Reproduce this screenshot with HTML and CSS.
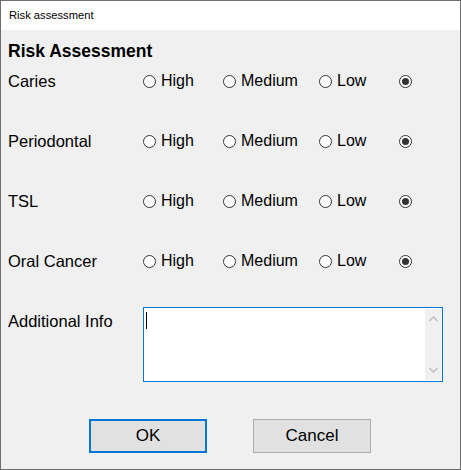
FILE: index.html
```html
<!DOCTYPE html>
<html lang="en">
<head>
    <meta charset="UTF-8">
    <meta name="viewport" content="width=device-width, initial-scale=1.0">
    <title>Risk assessment</title>
    <link rel="stylesheet" href="styles.css">
</head>
<body>
    <div class="window">
        <div class="titlebar">Risk assessment</div>
        <div class="content">
            <h1>Risk Assessment</h1>

            <div class="row">
                <div class="label">Caries</div>
                <div class="option high"><span class="radio"></span>High</div>
                <div class="option medium"><span class="radio"></span>Medium</div>
                <div class="option low"><span class="radio"></span>Low</div>
                <div class="option"><span class="radio checked"></span></div>
            </div>
            <div class="row">
                <div class="label">Periodontal</div>
                <div class="option high"><span class="radio"></span>High</div>
                <div class="option medium"><span class="radio"></span>Medium</div>
                <div class="option low"><span class="radio"></span>Low</div>
                <div class="option"><span class="radio checked"></span></div>
            </div>
            <div class="row">
                <div class="label">TSL</div>
                <div class="option high"><span class="radio"></span>High</div>
                <div class="option medium"><span class="radio"></span>Medium</div>
                <div class="option low"><span class="radio"></span>Low</div>
                <div class="option"><span class="radio checked"></span></div>
            </div>
            <div class="row">
                <div class="label">Oral Cancer</div>
                <div class="option high"><span class="radio"></span>High</div>
                <div class="option medium"><span class="radio"></span>Medium</div>
                <div class="option low"><span class="radio"></span>Low</div>
                <div class="option"><span class="radio checked"></span></div>
            </div>

            <div class="info-row">
                <div class="label info-label">Additional Info</div>
                <div class="textbox">
                    <span class="caret"></span>
                    <div class="scrollbar">
                        <svg width="17" height="14" viewBox="0 0 17 14"><path d="M4.5 9 L8.5 5 L12.5 9" fill="none" stroke="#c2c2c2" stroke-width="1.6"/></svg>
                        <svg width="17" height="14" viewBox="0 0 17 14"><path d="M4.5 5 L8.5 9 L12.5 5" fill="none" stroke="#c2c2c2" stroke-width="1.6"/></svg>
                    </div>
                </div>
            </div>

            <div class="buttons">
                <button class="btn default">OK</button>
                <button class="btn">Cancel</button>
            </div>
        </div>
    </div>
</body>
</html>
```
FILE: styles.css
```css
body {
    margin: 0;
    padding: 0;
    font-family: "Liberation Sans", Arial, sans-serif;
    color: #000;
}

.window {
    width: 461px;
    height: 470px;
    box-sizing: border-box;
    border: 1px solid #6e6e6e;
    background-color: #f0f0f0;
    display: flex;
    flex-direction: column;
}

.titlebar {
    height: 29px;
    background-color: #fff;
    font-size: 11.2px;
    line-height: 29px;
    padding-left: 8px;
}

.content {
    padding: 11px 0 0 7px;
}

h1 {
    margin: 0 0 8px 0;
    font-size: 17.5px;
    line-height: 20px;
    font-weight: bold;
}

.row {
    display: flex;
    align-items: center;
    height: 24px;
    margin-bottom: 36px;
    font-size: 16px;
}

.label {
    width: 135px;
    font-size: 16.5px;
    line-height: 18px;
}

.option {
    display: flex;
    align-items: center;
    gap: 5px;
}

.option.high {
    width: 80px;
}

.option.medium {
    width: 96px;
}

.option.low {
    width: 80px;
}

.radio {
    width: 11px;
    height: 11px;
    border: 1px solid #333;
    border-radius: 50%;
    background-color: #fff;
    position: relative;
}

.radio.checked::after {
    content: "";
    position: absolute;
    left: 2px;
    top: 2px;
    width: 7px;
    height: 7px;
    border-radius: 50%;
    background-color: #333;
}

.info-row {
    display: flex;
    margin-top: -2px;
}

.info-label {
    padding-top: 5px;
}

.textbox {
    width: 298px;
    height: 73px;
    border: 1px solid #0078d7;
    background-color: #fff;
    display: flex;
    justify-content: space-between;
}

.caret {
    width: 1px;
    height: 17px;
    background-color: #000;
    margin: 4px 0 0 2px;
}

.scrollbar {
    width: 17px;
    margin: 1px 0;
    background-color: #f0f0f0;
    display: flex;
    flex-direction: column;
    justify-content: space-between;
    padding: 3px 0;
}

.buttons {
    display: flex;
    gap: 46px;
    margin: 37px 0 0 81px;
}

.btn {
    width: 118px;
    height: 34px;
    box-sizing: border-box;
    background-color: #e1e1e1;
    border: 1px solid #adadad;
    font-family: "Liberation Sans", Arial, sans-serif;
    font-size: 17px;
    color: #000;
    padding: 0;
}

.btn.default {
    border: 2px solid #0078d7;
}
```
